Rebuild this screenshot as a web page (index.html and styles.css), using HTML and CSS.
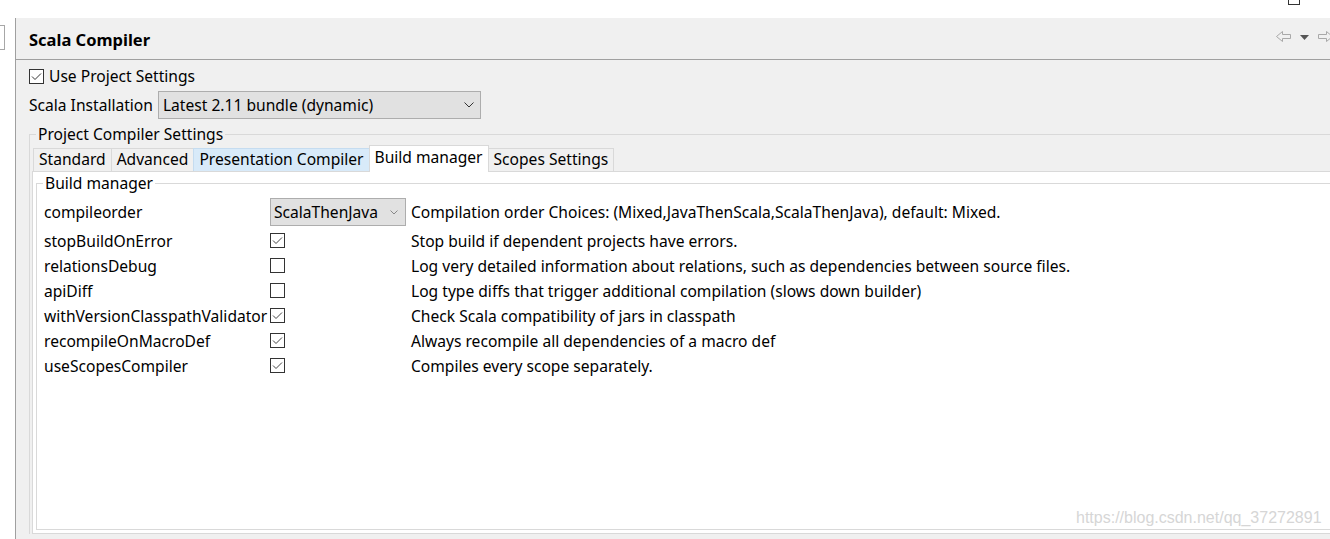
FILE: index.html
```html
<!DOCTYPE html>
<html>
<head>
<meta charset="utf-8">
<link rel="stylesheet" href="styles.css">
</head>
<body>
<div class="topbar"><span class="topbox"></span></div>
<div class="frame">
  <div class="leftpane"><div class="field-stub"></div></div>
  <div class="main">
    <div class="header">
      <h1 class="title">Scala Compiler</h1>
      <div class="nav">
        <svg class="arrow" width="15" height="12" viewBox="0 0 15 12"><polygon points="0.5,5.5 6.5,0.5 6.5,3.5 14.5,3.5 14.5,7.5 6.5,7.5 6.5,10.5" fill="none" stroke="#a9a9a9"/></svg>
        <svg class="drop" width="9" height="5" viewBox="0 0 9 5"><polygon points="0,0 9,0 4.5,5" fill="#555"/></svg>
        <svg class="arrow" width="15" height="12" viewBox="0 0 15 12"><polygon points="14.5,5.5 8.5,0.5 8.5,3.5 0.5,3.5 0.5,7.5 8.5,7.5 8.5,10.5" fill="none" stroke="#a9a9a9"/></svg>
      </div>
    </div>
    <div class="content">
      <label class="check-row">
        <span class="cb"><svg width="15" height="15" viewBox="0 0 15 15"><rect x="0.5" y="0.5" width="14" height="14" fill="#fff" stroke="#333"/><polyline points="3,7.5 6,10.5 12,4.5" fill="none" stroke="#333"/></svg></span>
        Use Project Settings
      </label>
      <div class="install-row">
        <span class="lbl">Scala Installation</span>
        <div class="combo wide"><span>Latest 2.11 bundle (dynamic)</span><svg width="10" height="6" viewBox="0 0 10 6"><polyline points="0.5,0.5 5,5 9.5,0.5" fill="none" stroke="#333"/></svg></div>
      </div>
      <fieldset class="group outer">
        <legend>Project Compiler Settings</legend>
        <div class="tabs">
          <div class="tab">Standard</div>
          <div class="tab">Advanced</div>
          <div class="tab hover">Presentation Compiler</div>
          <div class="tab active">Build manager</div>
          <div class="tab">Scopes Settings</div>
        </div>
        <div class="tab-body">
          <fieldset class="group inner">
            <legend>Build manager</legend>
            <div class="grid">
              <span>compileorder</span>
              <div class="combo small"><span>ScalaThenJava</span><svg width="8" height="5" viewBox="0 0 8 5"><polyline points="0.5,0.5 4,4 7.5,0.5" fill="none" stroke="#888"/></svg></div>
              <span>Compilation order Choices: (Mixed,JavaThenScala,ScalaThenJava), default: Mixed.</span>

              <span>stopBuildOnError</span>
              <span class="cb"><svg width="15" height="15" viewBox="0 0 15 15"><rect x="0.5" y="0.5" width="14" height="14" fill="#fff" stroke="#333"/><polyline points="3,7.5 6,10.5 12,4.5" fill="none" stroke="#444"/></svg></span>
              <span>Stop build if dependent projects have errors.</span>

              <span>relationsDebug</span>
              <span class="cb"><svg width="15" height="15" viewBox="0 0 15 15"><rect x="0.5" y="0.5" width="14" height="14" fill="#fff" stroke="#333"/></svg></span>
              <span>Log very detailed information about relations, such as dependencies between source files.</span>

              <span>apiDiff</span>
              <span class="cb"><svg width="15" height="15" viewBox="0 0 15 15"><rect x="0.5" y="0.5" width="14" height="14" fill="#fff" stroke="#333"/></svg></span>
              <span>Log type diffs that trigger additional compilation (slows down builder)</span>

              <span>withVersionClasspathValidator</span>
              <span class="cb"><svg width="15" height="15" viewBox="0 0 15 15"><rect x="0.5" y="0.5" width="14" height="14" fill="#fff" stroke="#333"/><polyline points="3,7.5 6,10.5 12,4.5" fill="none" stroke="#444"/></svg></span>
              <span>Check Scala compatibility of jars in classpath</span>

              <span>recompileOnMacroDef</span>
              <span class="cb"><svg width="15" height="15" viewBox="0 0 15 15"><rect x="0.5" y="0.5" width="14" height="14" fill="#fff" stroke="#333"/><polyline points="3,7.5 6,10.5 12,4.5" fill="none" stroke="#444"/></svg></span>
              <span>Always recompile all dependencies of a macro def</span>

              <span>useScopesCompiler</span>
              <span class="cb"><svg width="15" height="15" viewBox="0 0 15 15"><rect x="0.5" y="0.5" width="14" height="14" fill="#fff" stroke="#333"/><polyline points="3,7.5 6,10.5 12,4.5" fill="none" stroke="#444"/></svg></span>
              <span>Compiles every scope separately.</span>
            </div>
          </fieldset>
        </div>
      </fieldset>
    </div>
  </div>
</div>
<div class="watermark">https://blog.csdn.net/qq_37272891</div>
</body>
</html>
```
FILE: styles.css
```css
* { box-sizing: border-box; }
html, body { margin: 0; padding: 0; }
body {
  width: 1330px;
  height: 539px;
  overflow: hidden;
  background: #fff;
  font-family: "Noto Sans", "Open Sans", sans-serif;
  font-size: 15.6px;
  color: #000;
  position: relative;
}
.topbar {
  height: 18px;
  display: flex;
  justify-content: flex-end;
  padding-right: 30px;
}
.topbox {
  width: 12px;
  height: 5px;
  border: 1px solid #333;
  border-top: none;
}
.frame {
  display: flex;
  height: 521px;
  overflow: hidden;
}
.leftpane {
  width: 16px;
  flex: none;
  border-right: 1px solid #a0a0a0;
  padding-top: 7px;
}
.field-stub {
  width: 5px;
  height: 25px;
  border: 1px solid #a7a7a7;
  border-left: none;
  background: #fff;
}
.main {
  flex: 1;
  min-width: 0;
  background: #f0f0f0;
  overflow: hidden;
}
.header {
  height: 42px;
  border-bottom: 1px solid #a0a0a0;
  display: flex;
  align-items: center;
  padding-left: 13px;
}
.title {
  margin: 0;
  font-size: 16.5px;
  font-weight: 700;
  line-height: 22px;
  padding-top: 3px;
}
.nav {
  margin-left: auto;
  margin-right: -3px;
  display: flex;
  align-items: center;
  gap: 9px;
  padding-bottom: 3px;
}
.nav .drop { margin-top: 1px; }
.content {
  padding-left: 13px;
}
.check-row {
  display: flex;
  align-items: center;
  height: 20px;
  margin-top: 6px;
  gap: 5px;
}
.cb { display: inline-flex; width: 15px; height: 15px; }
.cb svg { display: block; }
.install-row {
  display: flex;
  align-items: center;
  margin-top: 5px;
  height: 28px;
}
.install-row .lbl { margin-right: 5px; }
.combo {
  display: flex;
  align-items: center;
  justify-content: space-between;
  height: 28px;
  background: #e1e1e1;
  border: 1px solid #adadad;
}
.combo.wide {
  width: 323px;
  padding: 0 6px 0 4px;
}
.combo.small {
  width: 136px;
  padding: 0 7px 0 3px;
}
.group {
  margin: 0;
  min-width: 0;
  border: 1px solid #d9d9d9;
  border-right: none;
}
.group legend {
  padding: 0 2px;
  line-height: 20px;
}
.outer {
  margin-top: 5px;
  padding: 2px 0 0 2px;
  border-bottom: none;
}
.outer > legend { margin-left: 4px; }
.tabs {
  display: flex;
  align-items: flex-end;
  height: 25px;
  position: relative;
  z-index: 1;
  padding-left: 1px;
}
.tab {
  height: 23px;
  line-height: 21px;
  padding: 0 5px;
  border: 1px solid #d9d9d9;
  border-bottom: none;
  margin-right: -1px;
  background: #f0f0f0;
}
.tab.hover {
  background: #d8eaf9;
  border-color: #c5dcf0;
  position: relative;
}
.tab.active {
  height: 27px;
  line-height: 23px;
  background: #fff;
  margin-bottom: -1px;
  position: relative;
}
.tab-body {
  height: 363px;
  background: #fff;
  border: 1px solid #d9d9d9;
  border-right: none;
}
.inner {
  margin: 1px 0 0 3px;
  height: 357px;
  padding: 3px 0 0 7px;
}
.inner > legend { margin-left: -1px; }
.grid {
  display: grid;
  grid-template-columns: 226px 141px auto;
  grid-template-rows: 32px repeat(6, 25px);
  align-items: center;
  white-space: nowrap;
}
.watermark {
  position: absolute;
  left: 1076px;
  top: 509px;
  font-family: "Liberation Sans", Arial, sans-serif;
  font-size: 16px;
  color: #d6d6d6;
}
```
